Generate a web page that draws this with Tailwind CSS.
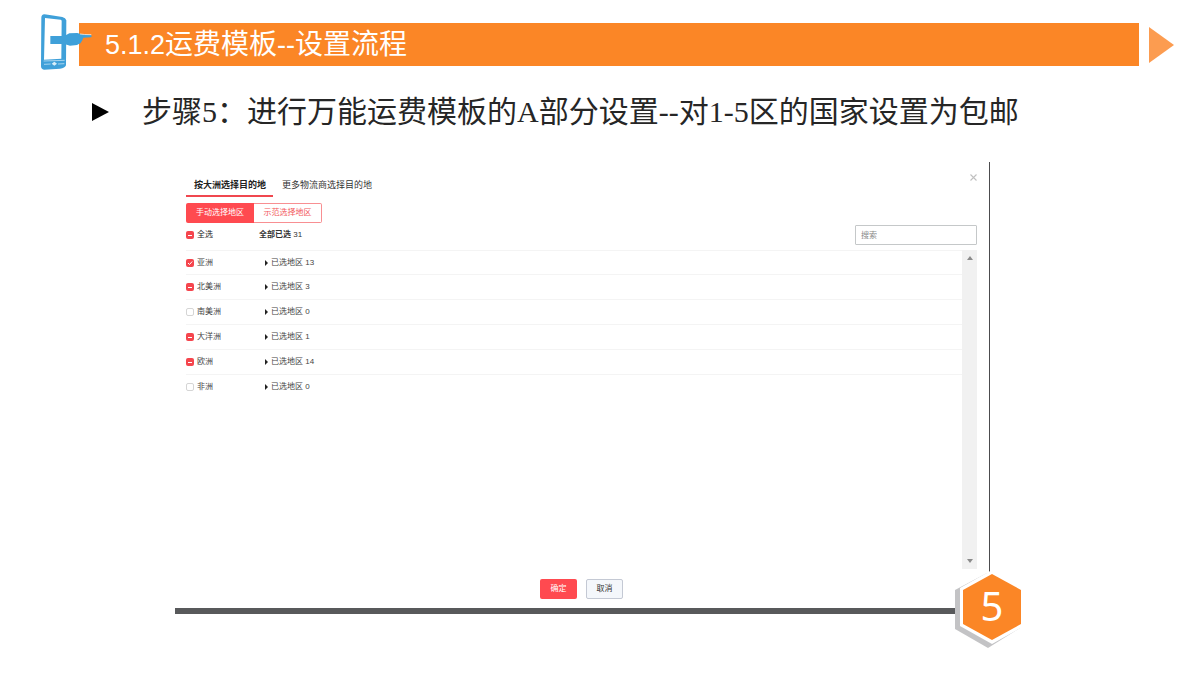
<!DOCTYPE html>
<html lang="zh-CN">
<head>
<meta charset="utf-8">
<title>5.1.2运费模板--设置流程</title>
<script src="https://cdn.jsdelivr.net/npm/@tailwindcss/browser@4"></script>
</head>
<body class="min-h-screen bg-white font-['Liberation_Sans','Noto_Sans_CJK_SC',sans-serif] text-[#222]">
<header class="flex items-center pt-[23px] pr-[26px] pl-[79px]">
  <div class="relative flex h-[43px] flex-1 items-center bg-[#fb8626] pl-[26px]">
    <svg class="absolute -top-[10px] -left-[39px] h-[58px] w-[54px]" viewBox="30 24 162 174" aria-hidden="true">
      <path fill="#fff" d="M42 38L104 44L106 182L38 188Z"/>
      <path fill="#3fa0d9" fill-rule="evenodd" d="M43 28Q34 29 34 38L33 184Q33 193 42 194L90 191Q105 190 108 181L109 46Q107 38 97 36L54 29ZM45 39L92 44Q95 45 95 48L94 161L42 164Z"/>
      <path fill="none" stroke="#d9eef9" stroke-width="2" d="M41 168L104 166M42 178L62 177M84 177L103 176"/>
      <path fill="#d9eef9" d="M73 170L81 176L73 182L65 176Z"/>
      <path fill="#3fa0d9" d="M61 93H103L118 85L142 84L154 88L183 90Q188 94 183 97L160 98L157 106L152 114L141 120L120 122L103 117H61Z"/>
      <path fill="none" stroke="#fff" stroke-width="2" d="M150 87Q160 89 184 89"/>
    </svg>
    <h1 class="text-[27px] leading-8 text-white">5.1.2<span class="text-[28px]">运费模板</span>--<span class="text-[28px]">设置流程</span></h1>
  </div>
  <svg class="ml-[10px] h-9 w-[25px]" viewBox="0 0 25 36" aria-hidden="true"><path fill="#fc9c50" d="M0 0L25 18L0 36Z"/></svg>
</header>
<main>
  <div class="mt-[26px] flex h-10 items-center pl-[92px]">
    <svg class="mr-[33px] h-[18px] w-[17px]" viewBox="0 0 17 18" aria-hidden="true"><path d="M0 0L17 9L0 18Z"/></svg>
    <h2 class="font-['Liberation_Serif','Noto_Sans_CJK_SC',serif] text-[30px] leading-10 text-[#262626]">步骤5：进行万能运费模板的A部分设置--对1-5区的国家设置为包邮</h2>
  </div>

  <section class="relative mt-[30px] mr-[210px] ml-[175px] border-r border-b-[6px] border-r-[#4c4c4e] border-b-[#58595b] pr-3 pl-[11px] text-[8px] leading-3">
    <div class="flex items-start justify-between pt-[10px]">
      <nav class="flex gap-2 text-[9px] leading-3">
        <a href="#" class="w-[87px] border-b-2 border-[#f0474f] pt-[7px] pb-[4px] pl-2 font-bold whitespace-nowrap text-[#222]">按大洲选择目的地</a>
        <a href="#" class="pt-[7px] pl-px text-[#333]">更多物流商选择目的地</a>
      </nav>
      <button type="button" aria-label="关闭" class="flex h-[10px] w-[7px] items-center justify-center"><svg class="h-[7px] w-[7px]" viewBox="0 0 7 7"><path d="M0.5 0.5L6.5 6.5M6.5 0.5L0.5 6.5" stroke="#c0c0c0" stroke-width="1.1"/></svg></button>
    </div>
    <div class="mt-[6px] flex h-5">
      <button type="button" class="w-[68px] rounded-l-xs bg-[#ff4a50] text-white">手动选择地区</button>
      <button type="button" class="w-[68px] rounded-r-xs border border-l-0 border-[#f88f92] text-[#f2575c]">示范选择地区</button>
    </div>
    <div class="mt-[2px] flex h-5 items-center">
      <label class="flex w-[73px] items-center gap-[3px]"><span class="grid size-2 place-items-center"><input type="checkbox" checked class="col-start-1 row-start-1 size-2 appearance-none rounded-xs bg-[#f5454d]"><span class="col-start-1 row-start-1 h-px w-1 bg-white"></span></span>全选</label>
      <span class="flex-1 font-bold text-[#333]">全部已选 <span class="font-normal">31</span></span>
      <input type="text" placeholder="搜索" aria-label="搜索" class="h-5 w-[122px] rounded-[1px] border border-[#c5c8c9] px-[5px] text-[8px] placeholder:text-[#888]">
    </div>
    <div class="mt-[5px] flex h-[319px]">
      <ul class="flex-1 border-t border-[#f4f4f4] text-[#444]">
        <li class="flex h-6 items-center border-b border-[#f4f4f4]">
          <label class="flex w-[79px] items-center gap-[3px]"><span class="grid size-2 place-items-center"><input type="checkbox" checked class="col-start-1 row-start-1 size-2 appearance-none rounded-xs bg-[#f5454d]"><svg class="col-start-1 row-start-1 size-2" viewBox="0 0 8 8"><path d="M2 4L3.5 5.5L6.2 2.5" fill="none" stroke="#fff"/></svg></span>亚洲</label>
          <button type="button" class="flex items-center gap-[3px]"><svg class="h-[6px] w-[3px]" viewBox="0 0 3 6"><path d="M0 0L3 3L0 6Z" fill="#222"/></svg>已选地区 13</button>
        </li>
        <li class="flex h-[25px] items-center border-b border-[#f4f4f4]">
          <label class="flex w-[79px] items-center gap-[3px]"><span class="grid size-2 place-items-center"><input type="checkbox" checked class="col-start-1 row-start-1 size-2 appearance-none rounded-xs bg-[#f5454d]"><span class="col-start-1 row-start-1 h-px w-1 bg-white"></span></span>北美洲</label>
          <button type="button" class="flex items-center gap-[3px]"><svg class="h-[6px] w-[3px]" viewBox="0 0 3 6"><path d="M0 0L3 3L0 6Z" fill="#222"/></svg>已选地区 3</button>
        </li>
        <li class="flex h-[25px] items-center border-b border-[#f4f4f4]">
          <label class="flex w-[79px] items-center gap-[3px]"><input type="checkbox" class="size-2 appearance-none rounded-xs border border-[#d5d5d5]">南美洲</label>
          <button type="button" class="flex items-center gap-[3px]"><svg class="h-[6px] w-[3px]" viewBox="0 0 3 6"><path d="M0 0L3 3L0 6Z" fill="#222"/></svg>已选地区 0</button>
        </li>
        <li class="flex h-[25px] items-center border-b border-[#f4f4f4]">
          <label class="flex w-[79px] items-center gap-[3px]"><span class="grid size-2 place-items-center"><input type="checkbox" checked class="col-start-1 row-start-1 size-2 appearance-none rounded-xs bg-[#f5454d]"><span class="col-start-1 row-start-1 h-px w-1 bg-white"></span></span>大洋洲</label>
          <button type="button" class="flex items-center gap-[3px]"><svg class="h-[6px] w-[3px]" viewBox="0 0 3 6"><path d="M0 0L3 3L0 6Z" fill="#222"/></svg>已选地区 1</button>
        </li>
        <li class="flex h-[25px] items-center border-b border-[#f4f4f4]">
          <label class="flex w-[79px] items-center gap-[3px]"><span class="grid size-2 place-items-center"><input type="checkbox" checked class="col-start-1 row-start-1 size-2 appearance-none rounded-xs bg-[#f5454d]"><span class="col-start-1 row-start-1 h-px w-1 bg-white"></span></span>欧洲</label>
          <button type="button" class="flex items-center gap-[3px]"><svg class="h-[6px] w-[3px]" viewBox="0 0 3 6"><path d="M0 0L3 3L0 6Z" fill="#222"/></svg>已选地区 14</button>
        </li>
        <li class="flex h-6 items-center">
          <label class="flex w-[79px] items-center gap-[3px]"><input type="checkbox" class="size-2 appearance-none rounded-xs border border-[#d5d5d5]">非洲</label>
          <button type="button" class="flex items-center gap-[3px]"><svg class="h-[6px] w-[3px]" viewBox="0 0 3 6"><path d="M0 0L3 3L0 6Z" fill="#222"/></svg>已选地区 0</button>
        </li>
      </ul>
      <div class="flex w-[15px] flex-col items-center justify-between bg-[#f1f1f1] py-[6px]">
        <svg class="h-1 w-[6px]" viewBox="0 0 6 4"><path d="M0 4L3 0L6 4Z" fill="#8b8b8b"/></svg>
        <svg class="h-1 w-[6px]" viewBox="0 0 6 4"><path d="M0 0L3 4L6 0Z" fill="#8b8b8b"/></svg>
      </div>
    </div>
    <div class="flex justify-center gap-[9px] pt-[10px] pb-[9px]">
      <button type="button" class="h-5 w-[37px] rounded-xs bg-[#ff4a50] text-white">确定</button>
      <button type="button" class="h-5 w-[37px] rounded-xs border border-[#c4c9d4] bg-[#f4f7fb] text-[#333]">取消</button>
    </div>
    <div class="absolute -right-9 -bottom-10 flex h-20 w-[70px] items-start justify-center pt-[18px] pl-1">
      <svg class="absolute inset-0 h-full w-full" viewBox="0 0 70 80" aria-hidden="true">
        <path fill="#c3c3c5" d="M0 22L32 5L65 24V60L33 80L0 61Z"/>
        <path fill="#fff" d="M37 2L69 20V58L37 76L5 58V20Z"/>
        <path fill="#fb8626" d="M37 6L66 22V56L37 72L8 56V22Z"/>
      </svg>
      <span class="relative font-['Noto_Sans',sans-serif] text-[40px] leading-10 text-white">5</span>
    </div>
  </section>
</main>
</body>
</html>
